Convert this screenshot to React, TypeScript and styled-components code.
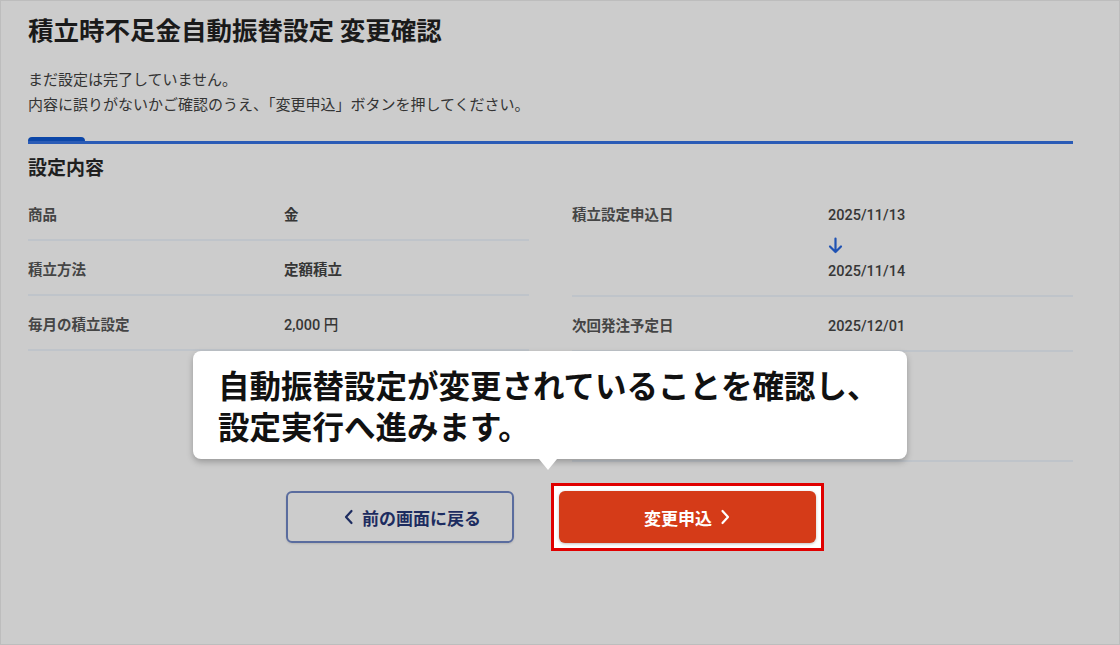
import React from "react";
import styled, { createGlobalStyle } from "styled-components";

const GlobalStyle = createGlobalStyle`
  html, body {
    margin: 0;
    padding: 0;
    background: #cccccc;
  }
  * {
    box-sizing: border-box;
  }
`;

const Page = styled.div`
  position: relative;
  width: 1120px;
  height: 645px;
  overflow: hidden;
  background: #cccccc;
  border: 1px solid #bdbdbd;
  padding: 0 46px 0 27px;
  font-family: "Noto Sans CJK JP", "Noto Sans", sans-serif;
  color: #222222;
`;

const Title = styled.h1`
  margin: 0;
  padding-top: 11px;
  font-size: 25.5px;
  line-height: 34px;
  font-weight: 700;
  color: #1a1a1a;
`;

const Lead = styled.p`
  margin: 20px 0 0;
  font-size: 15px;
  line-height: 25px;
  color: #333333;
`;

const TabBar = styled.div`
  margin-top: 21px;
  display: flex;
  border-bottom: 3px solid #2a5bb6;
`;

const TabIndicator = styled.div`
  width: 57px;
  height: 4px;
  background: #0b46a8;
  border-radius: 4px 4px 0 0;
`;

const SectionTitle = styled.h2`
  margin: 9px 0 0;
  font-size: 19px;
  line-height: 28px;
  font-weight: 700;
  color: #1f1f1f;
`;

const Grid = styled.div`
  margin-top: 5px;
  display: grid;
  grid-template-columns: 501px 501px;
  column-gap: 43px;
  align-items: start;
`;

const Column = styled.div`
  display: flex;
  flex-direction: column;
`;

const Row = styled.div<{ $minHeight?: number }>`
  display: grid;
  grid-template-columns: 256px 1fr;
  padding: 14px 0 11px;
  min-height: ${(p) => (p.$minHeight ? `${p.$minHeight}px` : "auto")};
  border-bottom: 2px solid #bfc4ca;
  font-size: 14.5px;
  line-height: 28px;
`;

const Label = styled.div`
  font-weight: 700;
  color: #454545;
`;

const Value = styled.div<{ $num?: boolean }>`
  display: flex;
  flex-direction: column;
  font-family: ${(p) =>
    p.$num ? `Roboto, "Noto Sans CJK JP", sans-serif` : `"Noto Sans CJK JP", sans-serif`};
  font-weight: ${(p) => (p.$num ? 500 : 700)};
  color: #363636;
  margin: ${(p) => (p.$num ? "2px 0 -2px" : "0")};
`;

const ArrowLine = styled.div`
  height: 28px;
  display: flex;
  align-items: center;
  padding-top: 3px;
`;

const ButtonRow = styled.div`
  margin-top: 29px;
  display: flex;
  justify-content: center;
  gap: 45px;
`;

const BaseButton = styled.button`
  height: 52px;
  border-radius: 6px;
  display: flex;
  align-items: center;
  justify-content: center;
  gap: 8px;
  font-family: "Noto Sans CJK JP", sans-serif;
  font-size: 17px;
  font-weight: 700;
  cursor: pointer;
`;

const BackButton = styled(BaseButton)`
  width: 228px;
  padding: 0 0 0 26px;
  background: transparent;
  border: 2px solid #5a6c9e;
  color: #1d2c60;
  box-shadow: 0 1px 2px rgba(0, 0, 0, 0.12);
`;

const Highlight = styled.div`
  margin: -8px;
  padding: 5px;
  border: 3px solid #e00000;
  background: #ffffff;
  display: flex;
`;

const SubmitButton = styled(BaseButton)`
  width: 257px;
  background: #d53b18;
  border: none;
  color: #ffffff;
  box-shadow: 0 1px 3px rgba(0, 0, 0, 0.25);
`;

const Tooltip = styled.div`
  position: absolute;
  left: 192px;
  top: 350px;
  width: 714px;
  padding: 13px 25px;
  background: #ffffff;
  border-radius: 8px;
  box-shadow: 0 3px 6px rgba(0, 0, 0, 0.25);
  color: #111111;

  &::after {
    content: "";
    position: absolute;
    left: 346px;
    bottom: -11px;
    border-left: 9px solid transparent;
    border-right: 9px solid transparent;
    border-top: 11px solid #ffffff;
  }
`;

const TooltipLine = styled.div`
  height: 41px;
  display: flex;
  align-items: center;
  font-size: 31.5px;
  line-height: 1;
  font-weight: 700;
  white-space: nowrap;
`;

const Chevron = ({ dir }: { dir: "left" | "right" }) => (
  <svg width="10" height="16" viewBox="0 0 10 16" fill="none">
    <path
      d={dir === "left" ? "M7.5 2 L2 8 L7.5 14" : "M2.5 2 L8 8 L2.5 14"}
      stroke="currentColor"
      strokeWidth="2.2"
      strokeLinecap="round"
      strokeLinejoin="round"
    />
  </svg>
);

const DownArrow = () => (
  <svg width="15" height="17" viewBox="0 0 15 17" fill="none">
    <path
      d="M7.5 1.5 V15 M2 9.5 L7.5 15 L13 9.5"
      stroke="#1f52b3"
      strokeWidth="2.2"
      strokeLinecap="round"
      strokeLinejoin="round"
    />
  </svg>
);

export default function App() {
  return (
    <>
      <GlobalStyle />
      <Page>
        <Title>積立時不足金自動振替設定 変更確認</Title>
        <Lead>
          まだ設定は完了していません。
          <br />
          内容に誤りがないかご確認のうえ、「変更申込」ボタンを押してください。
        </Lead>
        <TabBar>
          <TabIndicator />
        </TabBar>
        <SectionTitle>設定内容</SectionTitle>
        <Grid>
          <Column>
            <Row>
              <Label>商品</Label>
              <Value>金</Value>
            </Row>
            <Row>
              <Label>積立方法</Label>
              <Value>定額積立</Value>
            </Row>
            <Row>
              <Label>毎月の積立設定</Label>
              <Value $num>2,000 円</Value>
            </Row>
          </Column>
          <Column>
            <Row>
              <Label>積立設定申込日</Label>
              <Value $num>
                <span>2025/11/13</span>
                <ArrowLine>
                  <DownArrow />
                </ArrowLine>
                <span>2025/11/14</span>
              </Value>
            </Row>
            <Row>
              <Label>次回発注予定日</Label>
              <Value $num>2025/12/01</Value>
            </Row>
            <Row $minHeight={110} />
          </Column>
        </Grid>
        <ButtonRow>
          <BackButton>
            <Chevron dir="left" />
            前の画面に戻る
          </BackButton>
          <Highlight>
            <SubmitButton>
              変更申込
              <Chevron dir="right" />
            </SubmitButton>
          </Highlight>
        </ButtonRow>
        <Tooltip>
          <TooltipLine>自動振替設定が変更されていることを確認し、</TooltipLine>
          <TooltipLine>設定実行へ進みます。</TooltipLine>
        </Tooltip>
      </Page>
    </>
  );
}
